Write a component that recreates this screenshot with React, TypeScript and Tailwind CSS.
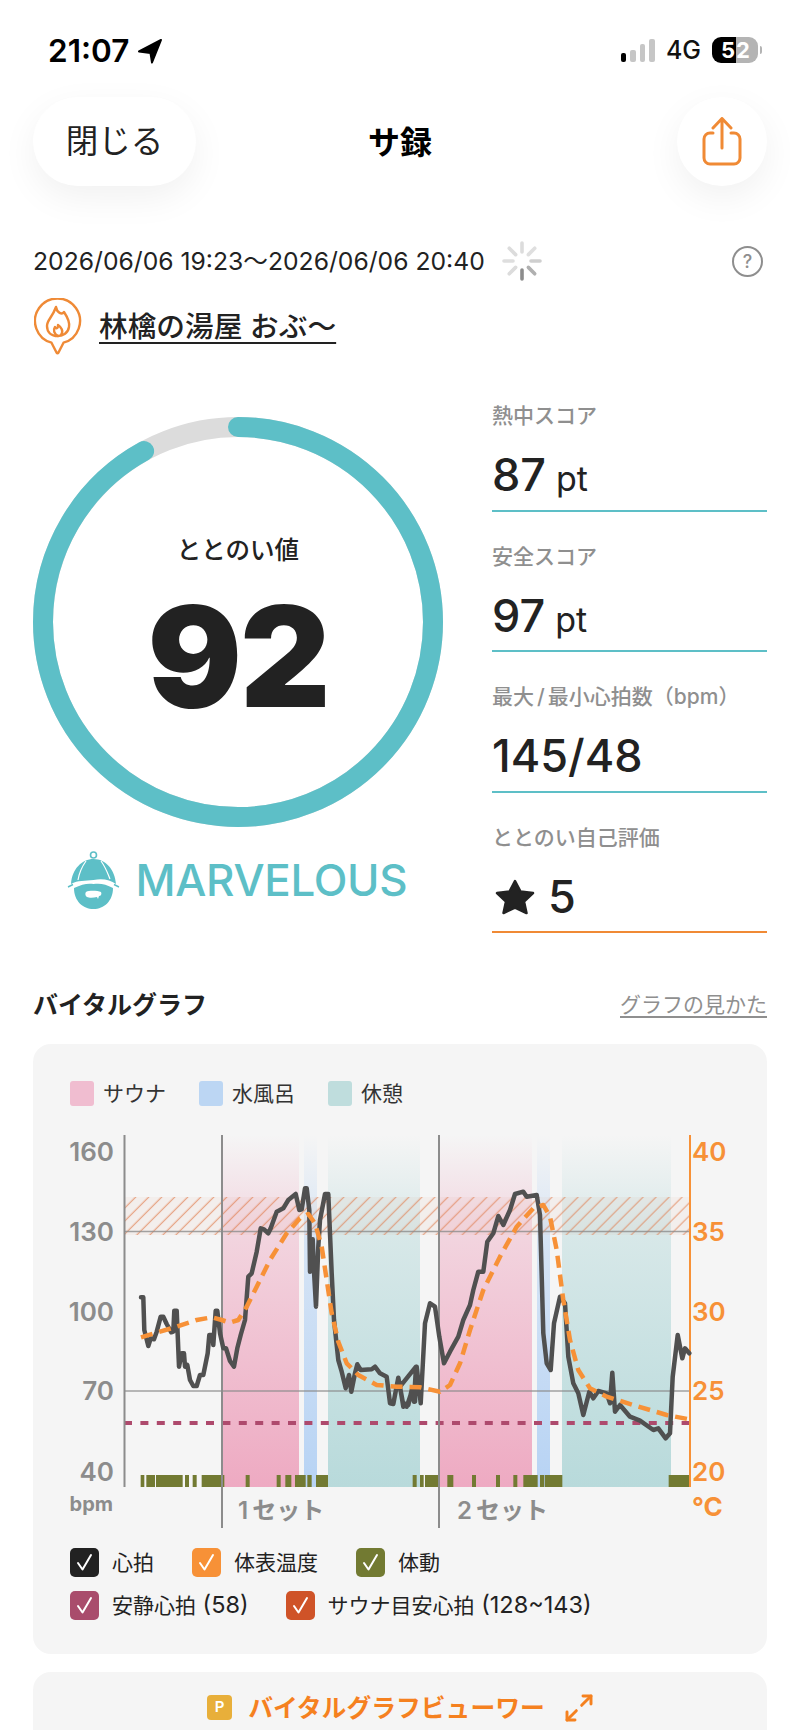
import React from "react";
import { Maximize2 } from "lucide-react";

// points read off the graph, [x, y] in page pixels after the two helpers below
const left = (pts: number[][]) => pts.map(([x, y]) => [30 + x / 3, 1100 + y / 3]);
const right = (pts: number[][]) => pts.map(([x, y]) => [400 + x / 3, 1100 + y / 3]);
const toLine = (pts: number[][]) => pts.map(([x, y]) => `${x.toFixed(1)},${y.toFixed(1)}`).join(" ");

const heartLine = [
  ...left([
    [333, 592], [340, 592], [343, 690], [355, 738], [362, 715], [372, 718], [380, 695], [392, 650], [400, 650],
    [410, 672], [424, 697], [430, 695], [433, 632], [440, 632], [447, 800], [455, 760], [462, 760], [465, 800],
    [472, 795], [480, 840], [490, 858], [500, 858], [510, 825], [520, 825], [533, 760], [538, 705], [548, 705],
    [550, 735], [557, 632], [562, 632], [570, 700], [580, 745], [588, 745], [600, 783], [612, 800], [622, 745],
    [632, 705], [645, 660], [655, 530], [665, 520], [680, 455], [692, 385], [702, 388], [715, 400], [722, 385],
    [740, 335], [760, 325], [775, 300], [797, 282], [808, 330], [815, 328], [825, 265], [830, 265], [838, 330],
    [840, 515], [848, 418], [853, 530], [858, 620], [865, 440], [870, 360], [885, 282], [895, 282], [905, 520],
    [912, 660], [925, 780], [935, 815], [947, 865], [957, 825], [964, 875], [975, 820], [982, 793], [992, 810],
    [1025, 808], [1035, 800], [1050, 820], [1070, 830], [1080, 910], [1090, 912], [1105, 833], [1118, 905],
    [1130, 920], [1145, 875], [1152, 905], [1158, 800],
  ]),
  ...right([
    [0, 860], [10, 920], [25, 915], [35, 870], [45, 905], [50, 800], [62, 910], [75, 670], [90, 610], [105, 620],
    [118, 710], [132, 790], [150, 755], [175, 710], [190, 660], [210, 615], [220, 570], [235, 515], [250, 515],
    [262, 425], [280, 400], [295, 348], [310, 375], [330, 330], [345, 282], [370, 275], [380, 290], [410, 285],
    [420, 345], [430, 700], [440, 790], [452, 810], [462, 670], [480, 590], [495, 610], [505, 770], [520, 850],
    [535, 880], [550, 945], [568, 875], [580, 895], [595, 873], [620, 880], [630, 910], [637, 818], [645, 935],
    [660, 915], [690, 950], [720, 962], [760, 990], [775, 985], [797, 1015], [810, 1000], [818, 830], [833, 705],
    [847, 775], [855, 745], [868, 760],
  ]),
];

const tempLine = [
  ...left([
    [333, 712], [390, 695], [440, 680], [500, 660], [545, 652], [575, 660], [600, 668], [625, 660], [650, 620],
    [680, 560], [720, 480], [770, 400], [810, 355], [835, 342], [855, 370], [875, 440], [890, 540], [905, 640],
    [925, 725], [950, 790], [985, 825], [1040, 855], [1100, 860],
  ]),
  ...right([
    [0, 860], [60, 862], [120, 875], [150, 855], [180, 790], [210, 690], [250, 570], [300, 470], [350, 380],
    [400, 325], [430, 315], [450, 350], [470, 450], [490, 600], [510, 720], [535, 810], [570, 865], [620, 890],
    [700, 915], [800, 945], [868, 958],
  ]),
];

// body movement ticks
const ticks = [
  ...[[332, 343], [349, 375], [378, 458], [465, 477], [488, 500], [515, 583], [647, 659], [740, 752], [766, 784], [795, 827], [832, 845], [858, 894]].map(
    ([a, b]) => [30 + a / 3, 30 + b / 3],
  ),
  ...[[38, 50], [60, 71], [75, 118], [142, 160], [216, 228], [288, 300], [340, 352], [370, 413], [420, 433], [435, 487], [806, 868]].map(
    ([a, b]) => [400 + a / 3, 400 + b / 3],
  ),
];

const bands = [
  { x1: 222, x2: 299, fill: "url(#sauna)" },
  { x1: 304, x2: 317, fill: "url(#water)" },
  { x1: 328, x2: 420, fill: "url(#rest)" },
  { x1: 439, x2: 532, fill: "url(#sauna)" },
  { x1: 537, x2: 550, fill: "url(#water)" },
  { x1: 562, x2: 671, fill: "url(#rest)" },
];

const StatusBar = () => (
  <div className="flex h-[97px] items-start justify-between pl-[48px] pr-[38px] pt-[36px]">
    <div className="flex items-center gap-[8px]">
      <span className="text-[31.5px] leading-[30px] font-semibold text-black">21:07</span>
      <svg width="26" height="26" viewBox="0 0 26 26">
        <path d="M24 2 L2 13.5 L13.5 15 L15 24.5 Z" fill="#000" stroke="#000" strokeWidth="2" strokeLinejoin="round" />
      </svg>
    </div>
    <div className="flex items-center pt-[1px]">
      <div className="flex h-[24px] items-end gap-[4px]">
        <div className="h-[9px] w-[5.5px] rounded-[2px] bg-black" />
        <div className="h-[12px] w-[5.5px] rounded-[2px] bg-[#c6c6c6]" />
        <div className="h-[18px] w-[5.5px] rounded-[2px] bg-[#c6c6c6]" />
        <div className="h-[23px] w-[5.5px] rounded-[2px] bg-[#c6c6c6]" />
      </div>
      <span className="ml-[11px] text-[25px] leading-[26px] font-medium text-[#111]">4G</span>
      <div className="ml-[11px] flex h-[26px] w-[46px] overflow-hidden rounded-[9px] text-[22px] leading-[26px] font-bold text-white">
        <div className="w-[24px] bg-black pl-[9px]">5</div>
        <div className="w-[22px] bg-[#b4b4b4]">2</div>
      </div>
      <div className="ml-[2px] h-[8px] w-[2px] rounded-r-[2px] bg-[#b4b4b4]" />
    </div>
  </div>
);

const Header = () => (
  <div className="grid h-[89px] grid-cols-3 items-center px-[33px]">
    <button className="flex h-[89px] w-[163px] items-center justify-center rounded-[45px] bg-white pt-[2px] text-[32.5px] text-[#222] shadow-[0_12px_36px_rgba(0,0,0,0.06)]">
      閉じる
    </button>
    <div className="pt-[2px] text-center text-[32px] font-bold text-black">サ録</div>
    <button className="flex h-[89px] w-[90px] items-center justify-center justify-self-end rounded-full bg-white shadow-[0_12px_36px_rgba(0,0,0,0.06)]">
      <svg width="40" height="50" viewBox="702 119 40 50" fill="none" stroke="#f08a35" strokeWidth="3" strokeLinecap="round" strokeLinejoin="round">
        <path d="M713 130 L722 120.5 L731 130 M722 121 V150" />
        <path d="M713 135 H710 a6 6 0 0 0 -6 6 V160 a6 6 0 0 0 6 6 H734 a6 6 0 0 0 6 -6 V141 a6 6 0 0 0 -6 -6 H731" />
      </svg>
    </button>
  </div>
);

const Spinner = () => {
  const spokes = ["#dcdcdc", "#dfdfdf", "#cfcfcf", "#b0b0b0", "#8c8c8c", "#dcdcdc", "#dedede", "#dcdcdc"];
  return (
    <svg width="40" height="40" viewBox="-20 -20 40 40">
      {spokes.map((color, i) => (
        <line key={i} x1="0" y1="-9" x2="0" y2="-18" stroke={color} strokeWidth="3.6" strokeLinecap="round" transform={`rotate(${i * 45})`} />
      ))}
    </svg>
  );
};

const PlacePin = () => (
  <svg width="48" height="57" viewBox="0 0 48 57" fill="none" stroke="#ef8a36" strokeWidth="2.4" strokeLinejoin="round" strokeLinecap="round">
    <path d="M17.5 44.7 A22.5 22.5 0 1 1 29.5 44.7 L24.5 54.5 q-1 1.5 -2 0 Z" fill="#fff" />
    <path d="M22 9 C23 15 28 17 30 14 C34 20 36 24 35 29 C34 35 29 38 24 38 C17 38 13 34 13 28 C13 22 18 20 22 9 Z" />
    <path d="M24 38 C20 36 19 32 21 29 C22 31 24 31 24 27 C27 29 30 33 27 37" />
  </svg>
);

const Ring = () => (
  <svg width="410" height="410" viewBox="0 0 410 410" className="col-start-1 row-start-1">
    <circle cx="205" cy="205" r="195" fill="none" stroke="#dcdcdc" strokeWidth="20" />
    <circle
      cx="205"
      cy="205"
      r="195"
      fill="none"
      stroke="#5dbfc7"
      strokeWidth="20"
      strokeLinecap="round"
      pathLength={100}
      strokeDasharray="92 100"
      transform="rotate(-90 205 205)"
    />
  </svg>
);

const Mascot = () => (
  <svg width="70" height="70" viewBox="0 0 70 70" className="my-[-7px] ml-[-8px]">
    <circle cx="33.5" cy="10" r="3" fill="none" stroke="#5dbfc7" strokeWidth="1.6" />
    <path d="M11 39 C12 24 22 14 33.5 14 C46 14 55 25 56 39 C50 35 43 33 33.5 35 C25 36 18 35 11 39 Z" fill="#5dbfc7" />
    <path d="M26 16 C21 23 19 29 18 35 M41 16 C46 23 48 29 50 34" fill="none" stroke="#fff" strokeWidth="1.2" />
    <path d="M8 42 L13 39.5 M54 39.5 L59 42" fill="none" stroke="#5dbfc7" strokeWidth="1.4" />
    <path d="M14 43 C22 39 28 38 33.5 39 C40 38 46 39 53 43 C53 56 44 64 33.5 64 C23 64 14 56 14 43 Z" fill="#5dbfc7" />
    <path d="M26 47 C30 45 38 46 41 47 C42 49 41 51 39 51 L38 54 L37 52 C33 53 29 53 27 52 C25 51 25 48 26 47 Z" fill="#fff" />
  </svg>
);

const Stat = ({ label, line = "border-[#5dbfc7]", children }: { label: React.ReactNode; line?: string; children: React.ReactNode }) => (
  <div className={`h-[140.5px] border-b-2 pt-[30px] ${line}`}>
    <div className="text-[21px] leading-[30px] font-medium text-[#8f8f8f]">{label}</div>
    <div className="mt-[19px] flex h-[50px] items-baseline text-[45px] leading-[50px] font-medium text-[#222]">{children}</div>
  </div>
);

const Swatch = ({ color, label, w }: { color: string; label: string; w: string }) => (
  <div className={`flex items-center gap-[9px] ${w}`}>
    <div className={`h-[25px] w-[24px] rounded-[3px] ${color}`} />
    <span className="text-[21px] leading-[25px] text-[#333]">{label}</span>
  </div>
);

const Check = ({ color, label, note }: { color: string; label: string; note?: string }) => (
  <div className="flex items-center gap-[13px]">
    <div className={`flex h-[29px] w-[29px] items-center justify-center rounded-[5px] ${color}`}>
      <svg width="29" height="29" viewBox="0 0 29 29" fill="none" stroke="#fff" strokeWidth="2" strokeLinecap="round" strokeLinejoin="round">
        <path d="M8 15 L12.5 21.5 L21 7" />
      </svg>
    </div>
    <span className="text-[21px] leading-[29px] text-[#222]">
      {label}
      {note && <span className="text-[23.5px]"> {note}</span>}
    </span>
  </div>
);

const VitalChart = () => (
  <svg width="734" height="410" viewBox="33 1125 734 410" className="block">
    <defs>
      <linearGradient id="sauna" x1="0" y1="0" x2="0" y2="1">
        <stop offset="0" stopColor="#eeaac2" stopOpacity="0" />
        <stop offset="0.3" stopColor="#eeaac2" stopOpacity="0.45" />
        <stop offset="1" stopColor="#eeaac2" />
      </linearGradient>
      <linearGradient id="water" x1="0" y1="0" x2="0" y2="1">
        <stop offset="0" stopColor="#b7d3f4" stopOpacity="0" />
        <stop offset="0.3" stopColor="#b7d3f4" stopOpacity="0.5" />
        <stop offset="1" stopColor="#b7d3f4" />
      </linearGradient>
      <linearGradient id="rest" x1="0" y1="0" x2="0" y2="1">
        <stop offset="0" stopColor="#b8dadb" stopOpacity="0" />
        <stop offset="0.3" stopColor="#b8dadb" stopOpacity="0.5" />
        <stop offset="1" stopColor="#b8dadb" />
      </linearGradient>
      <pattern id="hatch" width="9.2" height="9.2" patternUnits="userSpaceOnUse" patternTransform="rotate(45)">
        <line x1="4" y1="0" x2="4" y2="9.2" stroke="#e0794a" strokeOpacity="0.6" strokeWidth="1.3" />
      </pattern>
    </defs>

    {bands.map((b) => (
      <rect key={b.x1} x={b.x1} y="1135" width={b.x2 - b.x1} height="352" fill={b.fill} />
    ))}

    <rect x="124" y="1197" width="566" height="38" fill="#e0794a" fillOpacity="0.05" />
    <rect x="124" y="1197" width="566" height="38" fill="url(#hatch)" />

    <line x1="124" y1="1231.5" x2="690" y2="1231.5" stroke="#8c8c8c" strokeOpacity="0.8" strokeWidth="1.6" />
    <line x1="124" y1="1391" x2="690" y2="1391" stroke="#8c8c8c" strokeOpacity="0.8" strokeWidth="1.6" />
    <line x1="124" y1="1423" x2="690" y2="1423" stroke="#ae4a6d" strokeWidth="4" strokeDasharray="8 8.4" />

    {ticks.map(([a, b]) => (
      <rect key={a} x={a} y="1475" width={b - a} height="12" fill="#727a32" />
    ))}

    <line x1="124.5" y1="1135" x2="124.5" y2="1487" stroke="#8c8c8c" strokeWidth="2" />
    <line x1="222" y1="1135" x2="222" y2="1528" stroke="#8c8c8c" strokeWidth="2" />
    <line x1="439" y1="1135" x2="439" y2="1528" stroke="#8c8c8c" strokeWidth="2" />
    <line x1="690" y1="1135" x2="690" y2="1487" stroke="#f79137" strokeWidth="2" />

    <polyline points={toLine(heartLine)} fill="none" stroke="#505050" strokeWidth="4.5" strokeLinejoin="round" strokeLinecap="round" />
    <polyline points={toLine(tempLine)} fill="none" stroke="#f79137" strokeWidth="4.5" strokeDasharray="12 7" strokeLinejoin="round" />

    <g className="fill-[#8c8c8c] text-[26px] font-semibold" textAnchor="end">
      <text x="114" y="1161">160</text>
      <text x="114" y="1241">130</text>
      <text x="114" y="1321">100</text>
      <text x="114" y="1400">70</text>
      <text x="114" y="1481">40</text>
    </g>
    <g className="fill-[#f79137] text-[26px] font-semibold">
      <text x="692" y="1161">40</text>
      <text x="692" y="1241">35</text>
      <text x="692" y="1321">30</text>
      <text x="692" y="1400">25</text>
      <text x="692" y="1481">20</text>
      <text x="692" y="1516" className="font-bold">°C</text>
    </g>
    <text x="113" y="1511" textAnchor="end" className="fill-[#8c8c8c] text-[20px] font-bold">bpm</text>
    <text x="238" y="1519" className="fill-[#8c8c8c] text-[24px] font-semibold">
      1<tspan dx="4">セット</tspan>
    </text>
    <text x="457" y="1519" className="fill-[#8c8c8c] text-[24px] font-semibold">
      2<tspan dx="4">セット</tspan>
    </text>
  </svg>
);

export default function App() {
  return (
    <div lang="ja" className="h-[1730px] w-[800px] overflow-hidden bg-white font-['Inter','Noto_Sans_CJK_JP',sans-serif] text-[#222]">
      <StatusBar />
      <Header />

      {/* date row */}
      <div className="mt-[60px] flex h-[30px] items-center justify-between pl-[33px] pr-[37px]">
        <div className="flex items-center gap-[17px]">
          <span className="text-[24.7px] leading-[30px] text-[#222]">2026/06/06 19:23〜2026/06/06 20:40</span>
          <Spinner />
        </div>
        <div className="flex h-[31px] w-[31px] items-center justify-center rounded-full border-2 border-[#8e8e8e] text-[18px] font-medium text-[#8e8e8e]">?</div>
      </div>

      {/* place */}
      <div className="mt-[22px] flex h-[57px] items-start gap-[17px] pl-[34px]">
        <PlacePin />
        <span className="mt-[12px] text-[28.7px] leading-[34px] font-medium text-[#222] underline decoration-2 underline-offset-[5px]">林檎の湯屋 おぶ〜</span>
      </div>

      {/* score + stats */}
      <div className="mt-[16px] flex h-[527px] pl-[33px] pr-[33px]">
        <div className="w-[459px] pt-[46px]">
          <div className="grid h-[410px] w-[410px]">
            <Ring />
            <div className="col-start-1 row-start-1 flex flex-col items-center pt-[118px]">
              <div className="text-[24.5px] leading-[30px] font-medium text-[#222]">ととのい値</div>
              <div className="mt-[21px] text-[140px] leading-[140px] font-black tracking-[-2px] text-[#222]">92</div>
            </div>
          </div>
          <div className="mt-[25px] flex items-center gap-[5.5px] pl-[35px]">
            <Mascot />
            <span className="text-[43.9px] leading-[56px] font-medium tracking-[-0.3px] text-[#5dbfc7]">MARVELOUS</span>
          </div>
        </div>
        <div className="w-[275px]">
          <Stat label="熱中スコア">
            87<span className="ml-[10px] text-[34px] font-normal">pt</span>
          </Stat>
          <Stat label="安全スコア">
            97<span className="ml-[10px] text-[34px] font-normal">pt</span>
          </Stat>
          <Stat
            label={
              <>
                最大<span className="mx-[3px]">/</span>最小心拍数（bpm）
              </>
            }
          >
            145/48
          </Stat>
          <Stat label="ととのい自己評価" line="border-[#f08a35]">
            <svg width="40" height="36" viewBox="0 0 40 36" className="ml-[3px] mr-[13px] self-center">
              <polygon points="20,2 25.5,12.5 38,14 29,22.5 31.5,34 20,28.5 8.5,34 11,22.5 2,14 14.5,12.5" fill="#222" stroke="#222" strokeWidth="2.5" strokeLinejoin="round" />
            </svg>
            5
          </Stat>
        </div>
      </div>

      {/* graph heading */}
      <div className="mt-[92px] flex h-[30px] items-center justify-between px-[33px]">
        <span className="text-[25px] leading-[30px] font-semibold text-[#222]">バイタルグラフ</span>
        <span className="text-[21px] leading-[30px] text-[#8f8f8f] underline underline-offset-[4px]">グラフの見かた</span>
      </div>

      {/* graph card */}
      <div className="mx-[33px] mt-[24px] h-[610px] rounded-[18px] bg-[#f5f5f5] pt-[37px]">
        <div className="flex h-[25px] pl-[37px]">
          <Swatch color="bg-[#f0bdd0]" label="サウナ" w="w-[129px]" />
          <Swatch color="bg-[#bcd6f3]" label="水風呂" w="w-[129px]" />
          <Swatch color="bg-[#bfdddd]" label="休憩" w="w-[100px]" />
        </div>
        <div className="mt-[19px]">
          <VitalChart />
        </div>
        <div className="mt-[13px] flex flex-col gap-[13px] pl-[37px]">
          <div className="flex gap-[38px]">
            <Check color="bg-[#222]" label="心拍" />
            <Check color="bg-[#f79137]" label="体表温度" />
            <Check color="bg-[#727a32]" label="体動" />
          </div>
          <div className="flex gap-[37px]">
            <Check color="bg-[#a94c6c]" label="安静心拍" note="(58)" />
            <Check color="bg-[#cf5328]" label="サウナ目安心拍" note="(128~143)" />
          </div>
        </div>
      </div>

      {/* viewer link */}
      <div className="mx-[33px] mt-[18px] h-[100px] rounded-[18px] bg-[#f5f5f5] pt-[23px]">
        <div className="flex h-[25px] items-center justify-center gap-[16px] pl-[2px]">
          <div className="flex h-[25px] w-[25px] items-center justify-center rounded-[4px] bg-[#e8af3a] text-[15px] font-semibold text-white">P</div>
          <span className="text-[24.8px] leading-[30px] font-semibold text-[#f5811f]">バイタルグラフビューワー</span>
          <Maximize2 className="ml-[2px] h-[32px] w-[32px] text-[#f5811f]" strokeWidth={2.2} />
        </div>
      </div>
    </div>
  );
}
